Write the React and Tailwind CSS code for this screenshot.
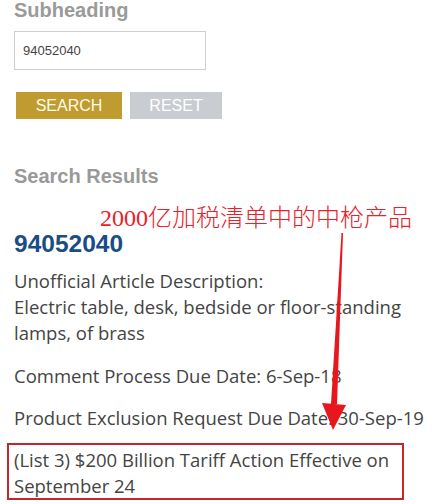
export default function App() {
  return (
    <div className="relative w-[436px] h-[504px] overflow-hidden bg-white font-['Open_Sans','Noto_Sans',sans-serif]">
      <div className="pl-[14px]">
        <h2 className="font-['Liberation_Sans',Arial,sans-serif] text-[20px] font-bold text-[#9a9a9a] leading-[20px]">Subheading</h2>
        <div className="mt-[11px] w-[192px] h-[39px] border border-[#cfcfcf] flex items-center pl-[8px]">
          <span className="font-['Liberation_Sans',Arial,sans-serif] text-[13px] text-[#444]">94052040</span>
        </div>
        <div className="mt-[22px] flex gap-[8px] pl-[2px] font-['Liberation_Sans',Arial,sans-serif]">
          <div className="w-[106px] h-[27px] bg-[#bf9b30] text-[#fffbe8] text-[16px] flex items-center justify-center">SEARCH</div>
          <div className="w-[92px] h-[27px] bg-[#c9ccd1] text-white text-[16px] flex items-center justify-center">RESET</div>
        </div>
        <h3 className="mt-[45px] font-['Liberation_Sans',Arial,sans-serif] text-[20px] font-bold text-[#999] leading-[24px]">Search Results</h3>
        <div className="mt-[42px] font-['Liberation_Sans',Arial,sans-serif] text-[24.5px] font-bold text-[#1a4c86] leading-[28px]">94052040</div>
        <div className="text-[18.5px] text-[#444] leading-[26px] pr-[4px]">
          <p className="mt-[10px]">Unofficial Article Description:<br />Electric table, desk, bedside or floor-standing lamps, of brass</p>
          <p className="mt-[17px]">Comment Process Due Date: 6-Sep-18</p>
          <p className="mt-[16px] whitespace-nowrap">Product Exclusion Request Due Date: 30-Sep-19</p>
        </div>
      </div>
      <div className="ml-[7px] mt-[12px] w-[397px] h-[57px] border-2 border-[#c3262c] pl-[5px] pt-[2px] text-[18.5px] text-[#444] leading-[26px]">
        (List 3) $200 Billion Tariff Action Effective on September 24
      </div>
      <div className="absolute left-[100px] top-[202px] text-[24px] text-[#e8222a] leading-[28px] whitespace-nowrap">
        <span className="font-['Liberation_Serif',serif]">2000</span>
        <span className="font-['Noto_Sans_CJK_SC',sans-serif] font-light">亿加税清单中的中枪产品</span>
      </div>
      <svg className="absolute left-0 top-0" width="436" height="504" viewBox="0 0 436 504">
        <polygon points="341.5,233 343,233 337,404 331,404" fill="#e8161d" />
        <polygon points="322,403 346,405 333,430" fill="#e8161d" />
      </svg>
    </div>
  );
}
